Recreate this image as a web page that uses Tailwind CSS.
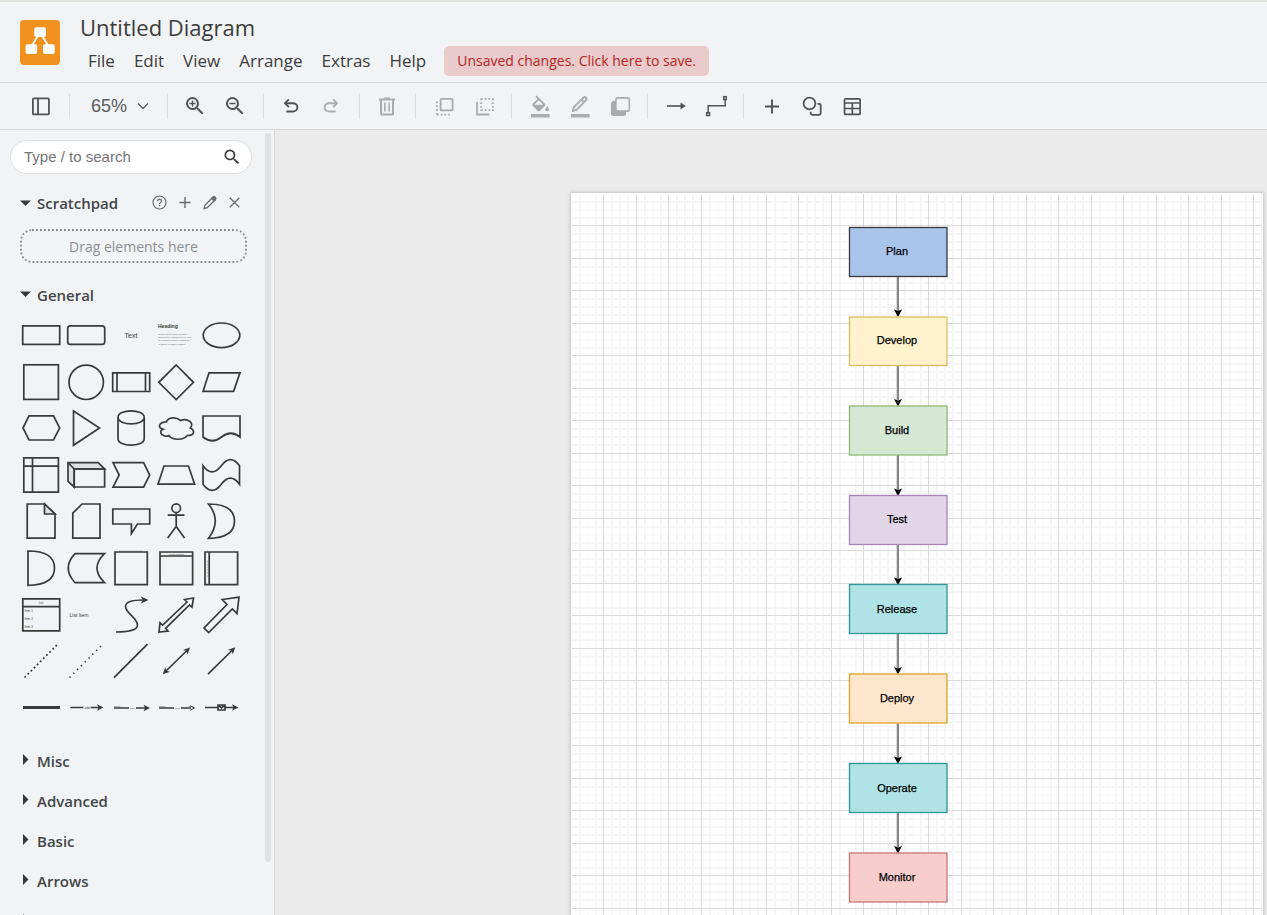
<!DOCTYPE html>
<html lang="en">
<head>
<meta charset="utf-8">
<title>Untitled Diagram</title>
<script src="https://cdn.jsdelivr.net/npm/@tailwindcss/browser@4"></script>
</head>
<body class="h-screen flex flex-col overflow-hidden bg-[#f1f3f5] text-[#3c3c3c] font-['Open_Sans','Noto_Sans',sans-serif]">

<header class="flex items-start border-t-2 border-t-[#e0e2dd] border-b border-b-[#d5d7d9] h-[83px] shrink-0 pl-5">
  <svg class="mt-[18px] w-10 h-[45px] shrink-0" viewBox="0 0 40 45" role="img" aria-label="Logo">
    <rect width="40" height="45" rx="4" fill="#f2921e"/>
    <path d="M19 14L11 27M21 14L29 27" stroke="#fff" stroke-width="1.8"/>
    <g fill="#fff"><rect x="14.3" y="7.3" width="11.7" height="9.7" rx="2"/><rect x="5.6" y="24.3" width="11.6" height="9.7" rx="2"/><rect x="23" y="24.3" width="11.7" height="9.7" rx="2"/></g>
  </svg>
  <div class="ml-5 pt-[11px]">
    <h1 class="text-[22px] leading-7 whitespace-nowrap">Untitled Diagram</h1>
    <div class="flex items-center mt-[5px] text-[17px] leading-[30px] whitespace-nowrap">
      <nav class="flex gap-[19px] pl-2">
        <button>File</button><button>Edit</button><button>View</button><button>Arrange</button><button>Extras</button><button>Help</button>
      </nav>
      <button class="ml-[18px] h-[30px] px-[13px] rounded-[5px] bg-[#e9cbcc] text-[#b62424] text-sm leading-[30px]">Unsaved changes. Click here to save.</button>
    </div>
  </div>
</header>

<div role="toolbar" class="flex items-center h-[47px] shrink-0 border-b border-[#d5d7d9] pl-[21px] text-[#505254]">
  <button aria-label="Sidebar" class="w-10 flex justify-center"><svg class="size-6" viewBox="0 0 24 24" fill="none" stroke="currentColor" stroke-width="1.8"><rect x="3.9" y="4.4" width="16" height="16" rx="1"/><path d="M9 4.400v16"/></svg></button>
  <i class="w-px h-[25px] bg-[#dedfe1] ml-2 mr-[7px]"></i>
  <button aria-label="Zoom" class="w-[82px] flex items-center pl-[14px] gap-[10px] text-lg leading-6 font-['Liberation_Sans',sans-serif] text-[#5a5c5e]">65%<svg class="w-3 h-2" viewBox="0 0 12 8" fill="none" stroke="currentColor" stroke-width="1.4"><path d="M1 1.500l5 5 5-5"/></svg></button>
  <i class="w-px h-[25px] bg-[#dedfe1] ml-2 mr-[7px]"></i>
  <button aria-label="Zoom in" class="w-10 flex justify-center"><svg class="size-6" viewBox="0 0 24 24" fill="currentColor"><path d="M15.500 14h-.79l-.28-.27A6.471 6.471 0 0 0 16 9.500 6.500 6.500 0 1 0 9.500 16c1.610 0 3.090-.59 4.230-1.570l.27.28v.79l5 4.990L20.490 19l-4.990-5zm-6 0C7.010 14 5 11.990 5 9.500S7.010 5 9.500 5 14 7.010 14 9.500 11.990 14 9.500 14zM12.500 10.200h-2.300v2.300H8.800v-2.300H6.500V8.800h2.300V6.500h1.400v2.300h2.300z"/></svg></button>
  <button aria-label="Zoom out" class="w-10 flex justify-center"><svg class="size-6" viewBox="0 0 24 24" fill="currentColor"><path d="M15.500 14h-.79l-.28-.27A6.471 6.471 0 0 0 16 9.500 6.500 6.500 0 1 0 9.500 16c1.610 0 3.090-.59 4.230-1.570l.27.28v.79l5 4.990L20.490 19l-4.990-5zm-6 0C7.010 14 5 11.990 5 9.500S7.010 5 9.500 5 14 7.010 14 9.500 11.990 14 9.500 14zM6.500 8.800h6v1.400h-6z"/></svg></button>
  <i class="w-px h-[25px] bg-[#dedfe1] ml-2 mr-[7px]"></i>
  <button aria-label="Undo" class="w-10 flex justify-center"><svg class="size-[22px]" viewBox="0 0 24 24" fill="currentColor"><path d="M7 19v-2h7.100q1.575 0 2.738-1T18 13.500 16.838 11 14.100 10H7.800l2.600 2.600L9 14 4 9l5-5 1.400 1.400L7.800 8h6.300q2.425 0 4.163 1.575T20 13.500t-1.737 3.925T14.100 19z"/></svg></button>
  <button aria-label="Redo" disabled class="w-10 flex justify-center text-[#a9abad]"><svg class="size-[22px] -scale-x-100" viewBox="0 0 24 24" fill="currentColor"><path d="M7 19v-2h7.100q1.575 0 2.738-1T18 13.500 16.838 11 14.100 10H7.800l2.600 2.600L9 14 4 9l5-5 1.400 1.400L7.800 8h6.300q2.425 0 4.163 1.575T20 13.500t-1.737 3.925T14.100 19z"/></svg></button>
  <i class="w-px h-[25px] bg-[#dedfe1] ml-2 mr-[7px]"></i>
  <button aria-label="Delete" disabled class="w-10 flex justify-center text-[#a9abad]"><svg class="size-6" viewBox="0 0 24 24" fill="currentColor"><path d="M7 21.500q-.825 0-1.412-.587T5 19.500V6.500H4V4.500h5V3.500h6v1h5v2h-1v13q0 .825-.587 1.413T17 21.500zM17 6.500H7v13h10zM9 17.500h1.600V8.500H9zm4.400 0H15V8.500h-1.600z"/></svg></button>
  <i class="w-px h-[25px] bg-[#dedfe1] ml-2 mr-[7px]"></i>
  <button aria-label="To front" disabled class="w-10 flex justify-center text-[#a9abad]"><svg class="size-6" viewBox="0 0 24 24" fill="none" stroke="currentColor" stroke-width="1.8"><rect x="9.600" y="4.800" width="12" height="11.600" rx="1"/><path d="M5.900 7.500V21" stroke-dasharray="1.800 2"/><path d="M5.900 20.700H19" stroke-dasharray="1.800 2"/></svg></button>
  <button aria-label="To back" disabled class="w-10 flex justify-center text-[#a9abad]"><svg class="size-6" viewBox="0 0 24 24" fill="none" stroke="currentColor" stroke-width="1.800"><path d="M10 4.900h12.500M10 16.200h12.500M10.200 4.500v12.400M21.800 4.500v12.400" stroke-dasharray="1.800 1.900"/><path d="M6 7.800V20.500h12.400"/></svg></button>
  <i class="w-px h-[25px] bg-[#dedfe1] ml-2 mr-[7px]"></i>
  <button aria-label="Fill color" disabled class="w-10 flex justify-center text-[#a9abad]"><svg class="size-6" viewBox="0 0 24 24" fill="currentColor"><path transform="translate(2.500 1.500) scale(.93)" d="M16.560 8.940L7.620 0 6.210 1.410l2.380 2.380-5.150 5.150c-.59.59-.59 1.540 0 2.120l5.500 5.500c.29.29.68.44 1.060.44s.77-.15 1.060-.44l5.500-5.500c.59-.58.59-1.530 0-2.120zM5.210 10L10 5.210 14.790 10H5.210zM19 11.500s-2 2.170-2 3.500c0 1.100.9 2 2 2s2-.9 2-2c0-1.330-2-3.500-2-3.500z"/><path d="M4 20h18.700v3.500H4z"/></svg></button>
  <button aria-label="Line color" disabled class="w-10 flex justify-center text-[#a9abad]"><svg class="size-6" viewBox="0 0 24 24" fill="none" stroke="currentColor" stroke-width="1.900"><path d="M6 16.800l.8-3.600L16.500 3.500q1.200-.9 2.400.2t.2 2.400L9.500 15.800zM14.500 5.500l2.700 2.700"/><path d="M4 20h18.700v3.500H4z" fill="currentColor" stroke="none"/></svg></button>
  <button aria-label="Shadow" disabled class="w-10 flex justify-center text-[#a9abad]"><svg class="size-6" viewBox="0 0 24 24"><rect x="4" y="7" width="15" height="15" rx="2.500" fill="currentColor"/><rect x="8.900" y="3.900" width="13.400" height="13.200" rx="1.500" fill="#f1f3f5" stroke="currentColor" stroke-width="1.600"/></svg></button>
  <i class="w-px h-[25px] bg-[#dedfe1] ml-2 mr-[7px]"></i>
  <button aria-label="Connection" class="w-10 flex justify-center"><svg class="size-6" viewBox="0 0 24 24"><path d="M4 12h14" stroke="currentColor" stroke-width="1.600"/><path d="M17.500 8.500L22.800 12l-5.300 3.500z" fill="currentColor"/></svg></button>
  <button aria-label="Waypoints" class="w-10 flex justify-center"><svg class="size-6" viewBox="0 0 24 24" fill="none" stroke="currentColor" stroke-width="1.500"><path d="M5.200 18.500V11.800H22.200V6"/><rect x="3.700" y="18.700" width="2.800" height="2.800"/><rect x="20.700" y="2.700" width="2.800" height="2.800"/></svg></button>
  <i class="w-px h-[25px] bg-[#dedfe1] ml-2 mr-[7px]"></i>
  <button aria-label="Insert" class="w-10 flex justify-center"><svg class="size-6" viewBox="0 0 24 24" stroke="currentColor" stroke-width="1.900"><path d="M6 12.500h14M13 5.500v14"/></svg></button>
  <button aria-label="Shapes" class="w-10 flex justify-center"><svg class="size-6" viewBox="0 0 24 24" fill="none" stroke="currentColor" stroke-width="1.800"><circle cx="10.500" cy="9.500" r="5.900"/><path d="M18.500 9.800h1.700q1.500 0 1.500 1.500v8q0 1.500-1.500 1.500h-7q-1.500 0-1.500-1.500v-1.500"/></svg></button>
  <button aria-label="Table" class="w-10 flex justify-center"><svg class="size-6" viewBox="0 0 24 24" fill="none" stroke="currentColor" stroke-width="1.700"><rect x="5.500" y="4.800" width="15.600" height="15.600" rx="1"/><path d="M5.500 9h15.600M5.500 14.500h15.600M13.300 9v11.500"/></svg></button>
</div>

<main class="flex flex-1 min-h-0">
  <aside class="relative w-[275px] shrink-0 border-r border-[#d5d7d9] overflow-hidden">
    <div class="absolute right-[3px] top-[3px] w-[6px] h-[729px] rounded-[3px] bg-[#e0e1e2]"></div>
    <div class="pl-[10px] pr-[22px] pt-[10px]">
      <div class="flex items-center h-[34px] rounded-full border border-[#dcdddf] bg-white pl-[13px] pr-[9px]">
        <input type="text" aria-label="Search shapes" placeholder="Type / to search" class="flex-1 min-w-0 text-[15px] leading-5 outline-none font-['Liberation_Sans',sans-serif] placeholder:text-[#757575]">
        <button aria-label="Search"><svg class="size-5" viewBox="0 0 24 24" fill="#3a3a3a"><path d="M15.500 14h-.79l-.28-.27A6.471 6.471 0 0 0 16 9.500 6.500 6.500 0 1 0 9.500 16c1.610 0 3.090-.59 4.230-1.570l.27.28v.79l5 4.990L20.490 19l-4.990-5zm-6 0C7.010 14 5 11.990 5 9.500S7.010 5 9.500 5 14 7.010 14 9.500 11.990 14 9.500 14z"/></svg></button>
      </div>
    </div>
    <div class="flex items-center justify-between h-10 mt-[9px] pl-5 pr-[31px]">
      <button class="flex items-center gap-[6px] text-[15px] leading-5 font-semibold text-[#444648]"><svg class="w-[11px] h-[11px]" viewBox="0 0 11 11"><path d="M0 2.500h11L5.500 8z" fill="#3a3a3a"/></svg>Scratchpad</button>
      <div class="flex gap-[9px] text-[#6a6c6e]">
        <button aria-label="Help"><svg class="size-4" viewBox="0 0 16 16" fill="none" stroke="currentColor" stroke-width="1.200"><circle cx="7.500" cy="7.500" r="6.500"/><path d="M5.500 6.200Q5.500 4.300 7.500 4.300t2 1.700q0 .9-1 1.500T7.500 9M7.500 10.200v1.300"/></svg></button>
        <button aria-label="Add"><svg class="size-4" viewBox="0 0 16 16" stroke="currentColor" stroke-width="1.400"><path d="M2.500 7.500h11M8 2v11"/></svg></button>
        <button aria-label="Edit"><svg class="size-4" viewBox="0 0 16 16" fill="none" stroke="currentColor" stroke-width="1.300"><path d="M2.200 13.500l.7-3.200L10.800 2.300q1.200-1 2.300.1t.1 2.300L5.300 12.700z"/><path d="M9.700 3.400l1.400-1.400q1.100-.7 2.200.4t.2 2.100L12 5.800z" fill="currentColor"/></svg></button>
        <button aria-label="Close"><svg class="size-4" viewBox="0 0 16 16" stroke="currentColor" stroke-width="1.300"><path d="M2.800 2.800l9.500 9.500M12.300 2.800L2.800 12.300"/></svg></button>
      </div>
    </div>
    <div class="relative mt-[6px] ml-5 mr-[27px] h-[34px] pt-[2px] flex items-center justify-center text-[14px] leading-5 text-[#8e9092]">
      <svg class="absolute inset-0 size-full overflow-visible" fill="none"><rect x="1" y="1" width="225" height="32" rx="11" stroke="#858789" stroke-width="1.800" stroke-dasharray="1.800 2.200"/></svg>
      Drag elements here
    </div>
    <button class="flex items-center gap-[6px] mt-[15px] h-[34px] pl-5 text-[15px] leading-5 font-semibold text-[#444648]"><svg class="w-[11px] h-[11px]" viewBox="0 0 11 11"><path d="M0 1.500h11L5.500 7z" fill="#3a3a3a"/></svg>General</button>

    <div id="shapes" class="grid grid-cols-5 grid-rows-9 w-[225px] h-[419px] ml-[18px] [&>button]:flex [&>button]:items-center [&>button]:justify-center [&_svg]:size-11 [&_svg]:overflow-visible [&_svg]:fill-none [&_svg]:stroke-[#3a3a3a] [&_svg]:stroke-[1.7] [&_text]:fill-[#3a3a3a] [&_text]:stroke-none [&_.s]:fill-[#3a3a3a] [&_.s]:stroke-none [&_.g]:fill-[#dfe1e3] font-['Liberation_Sans',sans-serif]">
      <button aria-label="Rectangle"><svg viewBox="0 0 44 44"><rect x="3.700" y="12.900" width="37" height="18.500"/></svg></button>
      <button aria-label="Rounded rectangle"><svg viewBox="0 0 44 44"><rect x="3.700" y="12.900" width="37" height="18.500" rx="2.700"/></svg></button>
      <button aria-label="Text"><svg viewBox="0 0 44 44"><text x="22" y="24.500" font-size="7" text-anchor="middle">Text</text></svg></button>
      <button aria-label="Textbox"><svg viewBox="0 0 44 44"><text x="4" y="14.500" font-size="5" font-weight="700">Heading</text><g font-size="2.400" opacity=".75"><text x="4" y="22">Lorem ipsum dolor sit amet,</text><text x="4" y="25.200">consectetur adipisicing elit, sed</text><text x="4" y="28.400">do eiusmod tempor incididunt</text><text x="4" y="31.600">ut labore et dolore magna.</text></g></svg></button>
      <button aria-label="Ellipse"><svg viewBox="0 0 44 44"><ellipse cx="22.500" cy="22.300" rx="18.300" ry="12.300"/></svg></button>

      <button aria-label="Square"><svg viewBox="0 0 44 44"><rect x="4.800" y="4.800" width="34.600" height="34.600"/></svg></button>
      <button aria-label="Circle"><svg viewBox="0 0 44 44"><circle cx="22.200" cy="22.300" r="17.200"/></svg></button>
      <button aria-label="Process"><svg viewBox="0 0 44 44"><path d="M3.700 12.900h37v18.600h-37zM8 12.900v18.600M36.500 12.900v18.600"/></svg></button>
      <button aria-label="Diamond"><svg viewBox="0 0 44 44"><path d="M22.200 5L39.500 22.300 22.200 39.500 4.800 22.300z"/></svg></button>
      <button aria-label="Parallelogram"><svg viewBox="0 0 44 44"><path d="M4 31.400L10 12.900H41L34.600 31.400z"/></svg></button>

      <button aria-label="Hexagon"><svg viewBox="0 0 44 44"><path d="M4 22L10 9.900H34.500L40.700 22 34.500 34H10z"/></svg></button>
      <button aria-label="Triangle"><svg viewBox="0 0 44 44"><path d="M9.500 5L35.500 22 9.500 39.300z"/></svg></button>
      <button aria-label="Cylinder"><svg viewBox="0 0 44 44"><path d="M9 11.300C9 2.700 35.200 2.700 35.200 11.300V32.700C35.200 41.300 9 41.300 9 32.700zM9 11.300C9 20 35.200 20 35.200 11.300"/></svg></button>
      <button aria-label="Cloud"><svg viewBox="0 0 44 44"><path d="M12.500 15.800C4.900 15.800 3 22 9.100 23.300 3 26 9.800 32 14.800 29.500 18.200 34.500 29.600 34.500 33.400 29.500 41 29.500 41 24.500 36.300 22 41 17 33.400 12 26.800 14.500 22 10.800 14.400 10.800 12.500 15.800z"/></svg></button>
      <button aria-label="Document"><svg viewBox="0 0 44 44"><path d="M4 10H41V31Q31.700 23.500 22.500 31T4 31z"/></svg></button>

      <button aria-label="Internal storage"><svg viewBox="0 0 44 44"><path d="M4.800 4.800H39.400V39.200H4.800zM13.500 4.800V39.200M4.800 13.200H39.400"/></svg></button>
      <button aria-label="Cube"><svg viewBox="0 0 44 44"><path class="g" d="M4 9.700H34.200L40.600 16H10.200V34L4 28.300z"/><path d="M4 9.700L10.200 16H40.600V34H10.200V16"/></svg></button>
      <button aria-label="Step"><svg viewBox="0 0 44 44"><path d="M4 9.700H34.600L40.700 22 34.600 34.100H4L10.200 22z"/></svg></button>
      <button aria-label="Trapezoid"><svg viewBox="0 0 44 44"><path d="M4 31.200L10 13H34.500L40.600 31.200z"/></svg></button>
      <button aria-label="Tape"><svg viewBox="0 0 44 44"><path d="M4 12.800Q13 25 22.300 12.800T40.500 12.800V31.200Q31.500 19 22.300 31.200T4 31.200z"/></svg></button>

      <button aria-label="Note"><svg viewBox="0 0 44 44"><path d="M8.200 5H25.500L36 15V39.200H8.200z"/><path class="g" d="M25.500 5V15H36z"/></svg></button>
      <button aria-label="Card"><svg viewBox="0 0 44 44"><path d="M18 5H36V39.200H8.800V14.200z"/></svg></button>
      <button aria-label="Callout"><svg viewBox="0 0 44 44"><path d="M3.800 10H40.700V25H28.500L22.400 34.500V25H3.800z"/></svg></button>
      <button aria-label="Actor"><svg viewBox="0 0 44 44"><circle cx="22.200" cy="9.200" r="4.300"/><path d="M22.200 13.500V27.500M13.700 16.200H30.500M13.700 39L22.200 27.500 30.500 39"/></svg></button>
      <button aria-label="Or"><svg viewBox="0 0 44 44"><path d="M9.500 5Q35.500 5 35.500 22T9.500 39.300Q23 22 9.500 5z"/></svg></button>

      <button aria-label="And"><svg viewBox="0 0 44 44"><path d="M9 5Q35.500 5 35.500 22T9 39.300z"/></svg></button>
      <button aria-label="Data storage"><svg viewBox="0 0 44 44"><path d="M11 7.700H40.500Q25.500 22 40.500 36.700H11Q-2.500 22 11 7.700z"/></svg></button>
      <button aria-label="Container"><svg viewBox="0 0 44 44"><path d="M6 6H38.300V38.700H6z"/><path d="M10 5.200H34" stroke-width=".4"/></svg></button>
      <button aria-label="Vertical container"><svg viewBox="0 0 44 44"><path d="M6 6H38.600V38.700H6zM6 10H38.600"/><text x="22.300" y="8.700" font-size="2" text-anchor="middle">Vertical Container</text></svg></button>
      <button aria-label="Horizontal container"><svg viewBox="0 0 44 44"><path d="M6 6H38.600V38.700H6zM10.200 6V38.700"/><text transform="translate(8.700 22.500) rotate(-90)" font-size="2" text-anchor="middle">Horizontal Container</text></svg></button>

      <button aria-label="List"><svg viewBox="0 0 44 44"><path d="M3.800 5.800H40.700V37.800H3.800zM3.800 13.600H40.700"/><g font-size="3"><text x="22" y="10.700" text-anchor="middle">List</text><text x="5.500" y="18.500">Item 1</text><text x="5.500" y="26.500">Item 2</text><text x="5.500" y="34.500">Item 3</text></g></svg></button>
      <button aria-label="List item"><svg viewBox="0 0 44 44"><text x="5.500" y="23.500" font-size="5">List Item</text></svg></button>
      <button aria-label="Curve"><svg viewBox="0 0 44 44"><path d="M7 39C17 39 28.500 38 28.500 32 28.500 25 16.500 20 16.500 13.500 16.500 8 25 7 34 7"/><path class="s" d="M39.500 7L31.500 3.200 34 7 31.500 10.800z"/></svg></button>
      <button aria-label="Bidirectional arrow"><svg viewBox="0 0 44 44"><path d="M39.500 5L30.500 6.500 33 9 8.700 32.200 6 29.800 5 39 14 38 11.600 35.300 35.500 12 38 14.200z"/></svg></button>
      <button aria-label="Arrow"><svg viewBox="0 0 44 44"><path d="M40 4.200L23.300 6.500 28 11.500 5 35 9.700 39.500 33.300 16 38 20.700z"/></svg></button>

      <button aria-label="Dashed line"><svg viewBox="0 0 44 44"><path d="M5.500 38.500L38.500 5.500" stroke-dasharray="1.800 2.600"/></svg></button>
      <button aria-label="Dotted line"><svg viewBox="0 0 44 44"><path d="M5.500 38.500L37.500 6.500" stroke-dasharray="1.300 4.100"/></svg></button>
      <button aria-label="Line"><svg viewBox="0 0 44 44"><path d="M5 38.700L38.500 5.200"/></svg></button>
      <button aria-label="Bidirectional connector"><svg viewBox="0 0 44 44"><path d="M12 32L33 11.500"/><path class="s" d="M36 8.500L28.800 11 32.600 12 33.500 15.700zM8.800 35.300L16 32.800 12.300 31.800 11.300 28.100z"/></svg></button>
      <button aria-label="Directional connector"><svg viewBox="0 0 44 44"><path d="M9 35.200L33 11.500"/><path class="s" d="M36.300 8.200L29 10.700 32.800 11.700 33.700 15.400z"/></svg></button>

      <button aria-label="Link"><svg viewBox="0 0 44 44"><path d="M4 21.500H41" stroke-width="3.200"/></svg></button>
      <button aria-label="Connector with label"><svg viewBox="0 0 44 44"><path d="M6.300 21.500H19M27 21.500H35"/><path class="s" d="M39.500 21.500L33 18.300 34.500 21.500 33 24.700z"/><text x="23" y="22.500" font-size="3" text-anchor="middle">Label</text></svg></button>
      <button aria-label="Connector with 2 labels"><svg viewBox="0 0 44 44"><path d="M5 22H20M27 22H36"/><path class="s" d="M41 22L34.500 18.800 36 22 34.500 25.200z"/><g font-size="2"><text x="5" y="21">Source</text><text x="23.500" y="22.700" text-anchor="middle">Label</text></g></svg></button>
      <button aria-label="Connector with 3 labels"><svg viewBox="0 0 44 44"><path d="M5 22H20M27 22H37"/><path d="M36 19.700L40.500 22 36 24.300" stroke-width="1"/><g font-size="2"><text x="5" y="21">Source</text><text x="23.500" y="22.700" text-anchor="middle">Label</text><text x="40" y="21" text-anchor="end">Target</text></g></svg></button>
      <button aria-label="Connector with symbol"><svg viewBox="0 0 44 44"><path d="M6 21.500H19M26 21.500H35"/><path d="M19 19H26V24H19zM19 19L22.500 22 26 19"/><path class="s" d="M39.500 21.500L33 18.300 34.500 21.500 33 24.700z"/></svg></button>
    </div>

    <div class="mt-[10px] text-[15px] leading-5 font-semibold text-[#444648] [&>button]:flex [&>button]:items-center [&>button]:gap-[7px] [&>button]:h-10 [&>button]:pl-[23px] [&_svg]:w-[7px] [&_svg]:h-[14px] [&_svg]:fill-[#3a3a3a]">
      <button><svg viewBox="0 0 7 14"><path d="M0 0v11l5.500-5.500z"/></svg>Misc</button>
      <button><svg viewBox="0 0 7 14"><path d="M0 0v11l5.500-5.500z"/></svg>Advanced</button>
      <button><svg viewBox="0 0 7 14"><path d="M0 0v11l5.500-5.500z"/></svg>Basic</button>
      <button><svg viewBox="0 0 7 14"><path d="M0 0v11l5.500-5.500z"/></svg>Arrows</button>
      <button aria-label="Flowchart"><svg viewBox="0 0 7 14"><path d="M0 0v11l5.500-5.500z"/></svg></button>
    </div>
  </aside>

  <section class="relative flex-1 overflow-hidden bg-[#ebebeb]">
    <div class="absolute left-[296px] top-[63px] w-[692px] h-[900px] bg-white shadow-[0_0_3px_1px_#c4c4c4]">
      <svg class="size-full" font-family="Liberation Sans, Arial, sans-serif" font-size="11" text-anchor="middle">
        <defs>
          <pattern id="grid" width="65" height="65" patternUnits="userSpaceOnUse" x="32" y="32">
            <path d="M50 0V65M0 50H65" stroke="#fcfcfc" stroke-width="2"/>
            <path d="M9 0V65M17 0V65M25 0V65M42 0V65M58 0V65M0 9H65M0 17H65M0 25H65M0 42H65M0 58H65" stroke="#f6f6f6" stroke-width="2"/>
            <path d="M.5 0V65M33.500 0V65M0 .5H65M0 33.500H65" stroke="#dadada"/>
          </pattern>
        </defs>
        <rect x="1" y="1" width="690" height="900" fill="url(#grid)"/>
        <g stroke="#868686" stroke-width="2">
          <path d="M327 83.500V118M327 173V207M327 262V297M327 351.500V386M327 441V475M327 530.500V565M327 620V654"/>
        </g>
        <path d="M323 116.500l4 1.500 4-1.500-4 7.500zM323 206l4 1.500 4-1.500-4 7.500zM323 295.500l4 1.500 4-1.500-4 7.500zM323 384.500l4 1.500 4-1.500-4 7.500zM323 474l4 1.500 4-1.500-4 7.500zM323 563.500l4 1.500 4-1.500-4 7.500zM323 653l4 1.500 4-1.500-4 7.500z"/>
        <g stroke-width="1.300">
          <rect x="278.500" y="34.500" width="97.500" height="49" fill="#a9c4eb" stroke="#36393d"/>
          <rect x="278.500" y="124" width="97.500" height="48.500" fill="#fff2cc" stroke="#d9bd62"/>
          <rect x="278.500" y="213" width="97.500" height="49" fill="#d5e8d4" stroke="#8fbb76"/>
          <rect x="278.500" y="302.500" width="97.500" height="49" fill="#e1d5e7" stroke="#a488b5"/>
          <rect x="278.500" y="391.500" width="97.500" height="49" fill="#b0e3e6" stroke="#319499"/>
          <rect x="278.500" y="481" width="97.500" height="49" fill="#ffe6cc" stroke="#dfa52c"/>
          <rect x="278.500" y="570.500" width="97.500" height="49" fill="#b0e3e6" stroke="#319499"/>
          <rect x="278.500" y="660" width="97.500" height="49" fill="#f8cecc" stroke="#c87875"/>
        </g>
        <g stroke="#000" stroke-width=".25">
          <text x="326" y="62">Plan</text><text x="326" y="151">Develop</text><text x="326" y="241">Build</text><text x="326" y="330">Test</text>
          <text x="326" y="420">Release</text><text x="326" y="509">Deploy</text><text x="326" y="599">Operate</text><text x="326" y="688">Monitor</text>
        </g>
      </svg>
    </div>
  </section>
</main>
</body>
</html>
